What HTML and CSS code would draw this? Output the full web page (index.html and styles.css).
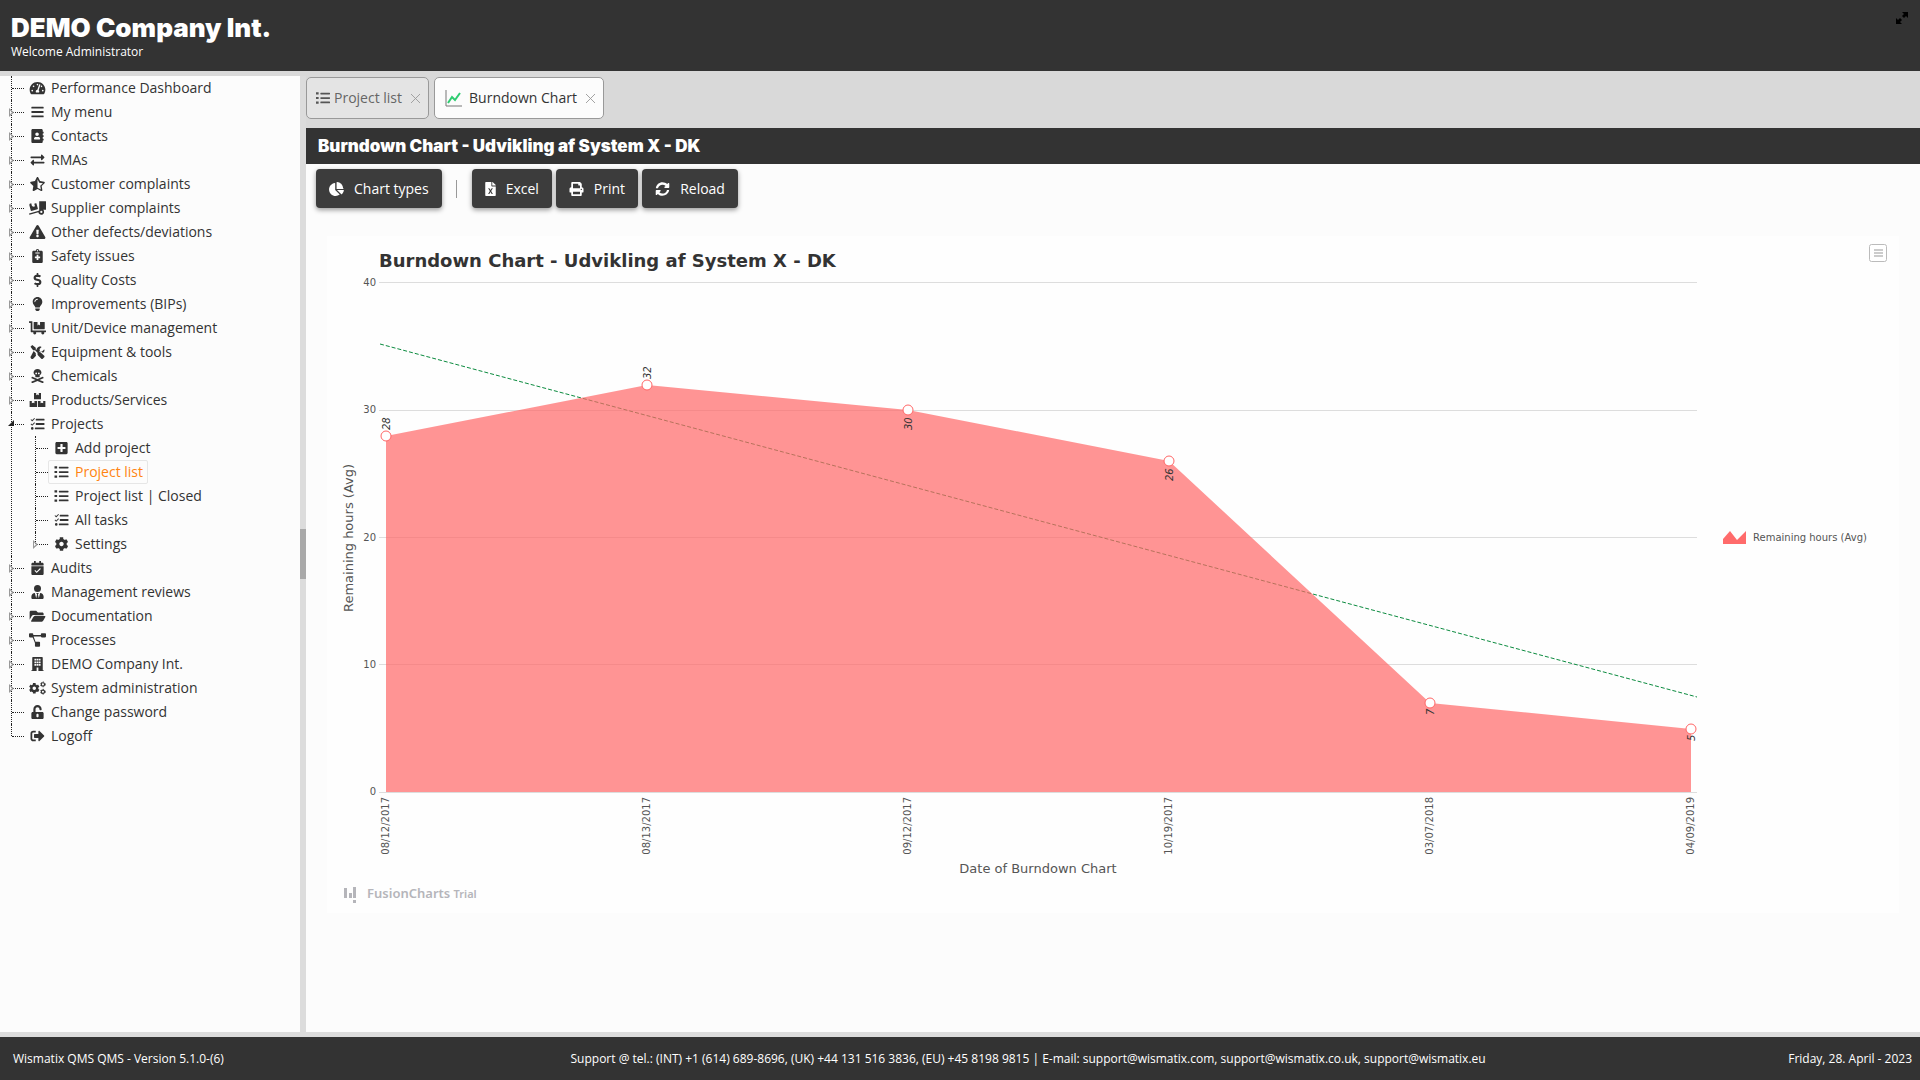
FILE: index.html
```html
<!DOCTYPE html>
<html lang="en">
<head>
<meta charset="utf-8">
<title>DEMO Company Int. - Burndown Chart</title>
<link rel="stylesheet" href="styles.css">
</head>
<body>
<svg class="sprite" aria-hidden="true">
  <symbol id="i-gauge" viewBox="0 0 576 512"><path d="M288 32C129 32 0 161 0 320c0 53 14 102 39 145 6 9 16 15 27 15h443c11 0 22-6 27-15 25-43 40-92 40-145C576 161 447 32 288 32zm0 64c15 0 26 10 30 24-1 2-3 4-4 7l-9 28c-5 3-11 5-17 5-18 0-32-14-32-32s14-32 32-32zM96 384c-18 0-32-14-32-32s14-32 32-32 32 14 32 32-14 32-32 32zm48-160c-18 0-32-14-32-32s14-32 32-32 32 14 32 32-14 32-32 32zm246-72l-61 184c14 12 23 29 23 48 0 12-3 23-9 32H233c-6-9-9-20-9-32 0-34 27-62 60-64l61-183c4-13 18-20 30-16 13 4 20 18 15 31zm15 57l15-46c4-1 8-3 12-3 18 0 32 14 32 32s-14 32-32 32c-11 0-21-6-27-15zm75 175c-18 0-32-14-32-32s14-32 32-32 32 14 32 32-14 32-32 32z"/></symbol>
  <symbol id="i-bars" viewBox="0 0 448 512"><path d="M16 132h416c9 0 16-7 16-16V76c0-9-7-16-16-16H16C7 60 0 67 0 76v40c0 9 7 16 16 16zm0 160h416c9 0 16-7 16-16v-40c0-9-7-16-16-16H16c-9 0-16 7-16 16v40c0 9 7 16 16 16zm0 160h416c9 0 16-7 16-16v-40c0-9-7-16-16-16H16c-9 0-16 7-16 16v40c0 9 7 16 16 16z"/></symbol>
  <symbol id="i-book" viewBox="0 0 448 512"><path d="M436 160c7 0 12-5 12-12v-40c0-7-5-12-12-12h-20V48c0-27-21-48-48-48H48C21 0 0 21 0 48v416c0 27 21 48 48 48h320c27 0 48-21 48-48v-48h20c7 0 12-5 12-12v-40c0-7-5-12-12-12h-20v-64h20c7 0 12-5 12-12v-40c0-7-5-12-12-12h-20v-64h20zm-228-32c35 0 64 29 64 64s-29 64-64 64-64-29-64-64 29-64 64-64zm112 237c0 10-10 19-22 19H118c-12 0-22-9-22-19v-19c0-32 30-58 67-58h5c12 5 26 8 40 8s28-3 40-8h5c37 0 67 26 67 58v19z"/></symbol>
  <symbol id="i-exchange" viewBox="0 0 512 512"><path d="M0 168v-16c0-13 11-24 24-24h360V80c0-21 26-32 41-17l80 80c9 9 9 25 0 34l-80 80c-15 15-41 4-41-17v-48H24c-13 0-24-11-24-24zm488 152H128v-48c0-21-26-32-41-17L7 335c-9 9-9 25 0 34l80 80c15 15 41 4 41-17v-48h360c13 0 24-11 24-24v-16c0-13-11-24-24-24z"/></symbol>
  <symbol id="i-star" viewBox="0 0 576 512"><path fill-rule="evenodd" d="M288 0c-11 0-23 6-29 18l-65 132-146 21c-26 4-37 36-18 55l106 103-25 146c-5 26 23 46 46 34l131-69 131 69c23 12 51-8 46-34l-25-146 106-103c19-19 8-51-18-55l-146-21-65-132C311 6 299 0 288 0zm0 80l63 128 135 20-98 96 23 134-123-64z"/></symbol>
  <symbol id="i-truck" viewBox="0 0 640 512"><path d="M384 0v352c-18 2-34 8-48 17L5 460c-4 2-6 6-4 10l10 31c1 4 6 7 10 5l331-90c8 54 52 96 106 96 60 0 110-50 110-110 0-32-13-58-35-76h107V16c0-9-7-16-16-16H384zm80 362a42 42 0 1 1 0 84 42 42 0 0 1 0-84zM16 166l50 184c3 12 15 19 27 16l224-61c12-3 19-15 16-27l-50-184c-3-12-15-19-27-16l-58 15 28 100-58 16-56-28-28-100-52 14c-12 3-19 15-16 27z"/></symbol>
  <symbol id="i-warning" viewBox="0 0 576 512"><path d="M570 440c18 32-5 72-42 72H48c-37 0-60-40-42-72L246 24c19-32 65-32 84 0l240 416zM288 354c-25 0-46 21-46 46s21 46 46 46 46-21 46-46-21-46-46-46zm-44-165l8 136c0 6 5 11 12 11h48c7 0 12-5 12-11l8-136c0-7-5-13-12-13h-64c-7 0-12 6-12 13z"/></symbol>
  <symbol id="i-clip" viewBox="0 0 384 512"><path fill-rule="evenodd" d="M336 64h-80a64 64 0 0 0-128 0H48C21 64 0 85 0 112v352c0 27 21 48 48 48h288c27 0 48-21 48-48V112c0-27-21-48-48-48zM192 40a24 24 0 1 1 0 48 24 24 0 0 1 0-48zm-80 88h160v32H112zM160 208h64v64h64v64h-64v64h-64v-64H96v-64h64z"/></symbol>
  <symbol id="i-dollar" viewBox="0 0 288 512"><path d="M209 233l-108-31c-13-4-21-16-21-29 0-16 13-29 29-29h66c12 0 24 4 34 11 6 4 14 3 20-2l35-34c7-7 6-18-2-24-24-19-54-30-86-31V16c0-9-7-16-16-16h-32c-9 0-16 7-16 16v48h-3C46 64-5 116 1 180c4 45 39 82 82 95l103 30c12 4 21 16 21 29 0 16-13 29-29 29h-66c-12 0-24-4-34-11-6-4-14-3-20 2l-35 34c-7 7-6 18 2 24 24 19 54 30 87 31v53c0 9 7 16 16 16h32c9 0 16-7 16-16v-53c46-1 90-28 105-72 21-61-14-121-72-138z"/></symbol>
  <symbol id="i-bulb" viewBox="0 0 352 512"><path fill-rule="evenodd" d="M96 454c0 6 2 13 5 18l17 25c6 9 16 15 27 15h62c11 0 21-6 27-15l17-25c4-5 5-11 5-18v-38H96v38zM0 176c0 44 16 85 43 116 17 19 43 59 53 92h160c10-33 36-73 53-92 27-31 43-72 43-116C352 79 273 0 176 0S0 79 0 176zm176-80c-44 0-80 36-80 80 0 9-7 16-16 16s-16-7-16-16c0-62 50-112 112-112 9 0 16 7 16 16s-7 16-16 16z"/></symbol>
  <symbol id="i-dolly" viewBox="0 0 640 512"><path d="M0 0h112c9 0 16 7 16 16v336h496c9 0 16 7 16 16v32c0 9-7 16-16 16h-55a56 56 0 1 1-98 0H265a56 56 0 1 1-98 0H80c-9 0-16-7-16-16V64H16C7 64 0 57 0 48zM176 48c0-9 7-16 16-16h128v128l48-32 48 32V32h160c9 0 16 7 16 16v240c0 9-7 16-16 16H192c-9 0-16-7-16-16z"/></symbol>
  <symbol id="i-tools" viewBox="0 0 512 512"><path d="M502 395L385 279c-27-27-65-32-97-16L192 167V96L64 0 0 64l96 128h71l96 96c-15 32-10 70 16 97l117 117c14 14 37 14 52 0l54-54c14-15 14-38 0-53zM331 225c38 0 73 15 99 41l19 19c15-6 29-16 41-27 21-22 26-54 18-84-3-9-15-11-22-4l-66 66-76-13-13-76 66-66c7-7 4-18-5-21-49-12-104 4-139 40-27 26-40 62-39 98l80 80zM196 298l-82-82L20 405c-27 27-27 61 0 87s61 27 87 0l95-96c-10-31-13-65-6-98z"/></symbol>
  <symbol id="i-skull" viewBox="0 0 448 512"><path d="M439 461L296 400l143-61c8-4 11-13 7-21l-14-29c-4-8-13-11-21-7l-187 80-187-80c-8-4-17 0-21 7L2 318c-4 8-1 17 7 21l143 61L9 461c-8 4-11 13-7 21l14 29c4 8 13 11 21 7l187-80 187 80c8 4 17 0 21-7l14-29c4-8 1-17-7-21zM144 233v55c0 9 8 16 17 16h126c9 0 17-7 17-16v-55c39-25 64-62 64-105C368 57 304 0 224 0S80 57 80 128c0 43 25 80 64 105zm128-106a33 33 0 1 1 0 66 33 33 0 0 1 0-66zm-96 0a33 33 0 1 1 0 66 33 33 0 0 1 0-66z"/></symbol>
  <symbol id="i-boxes" viewBox="0 0 576 512"><path d="M160 0h80v80l48-24 48 24V0h80v224H160zM0 288h80v88l48-24 48 24v-88h96v224H0zM304 288h96v88l48-24 48 24v-88h80v224H304z"/></symbol>
  <symbol id="i-tasks" viewBox="0 0 512 512"><path d="M140 36l24 23-91 93c-6 5-14 5-19 0L2 102l22-24 39 36zM140 196l24 23-91 93c-6 5-14 5-19 0L2 262l22-24 39 36zM64 368a48 48 0 1 1 0 96 48 48 0 0 1 0-96zM208 60h288c9 0 16 7 16 16v40c0 9-7 16-16 16H208c-9 0-16-7-16-16V76c0-9 7-16 16-16zm0 160h288c9 0 16 7 16 16v40c0 9-7 16-16 16H208c-9 0-16-7-16-16v-40c0-9 7-16 16-16zm-32 160h320c9 0 16 7 16 16v40c0 9-7 16-16 16H176c-9 0-16-7-16-16v-40c0-9 7-16 16-16z"/></symbol>
  <symbol id="i-plus" viewBox="0 0 448 512"><path d="M400 32H48C22 32 0 54 0 80v352c0 27 22 48 48 48h352c27 0 48-21 48-48V80c0-26-21-48-48-48zm-32 252c0 7-5 12-12 12h-92v92c0 7-5 12-12 12h-56c-7 0-12-5-12-12v-92H92c-7 0-12-5-12-12v-56c0-7 5-12 12-12h92v-92c0-7 5-12 12-12h56c7 0 12 5 12 12v92h92c7 0 12 5 12 12z"/></symbol>
  <symbol id="i-list" viewBox="0 0 512 512"><path d="M0 48h96v80H0zM0 216h96v80H0zM0 384h96v80H0zM176 60h320c9 0 16 7 16 16v32c0 9-7 16-16 16H176c-9 0-16-7-16-16V76c0-9 7-16 16-16zm0 164h320c9 0 16 7 16 16v32c0 9-7 16-16 16H176c-9 0-16-7-16-16v-32c0-9 7-16 16-16zm0 164h320c9 0 16 7 16 16v32c0 9-7 16-16 16H176c-9 0-16-7-16-16v-32c0-9 7-16 16-16z"/></symbol>
  <symbol id="i-cog" viewBox="0 0 512 512"><path d="M487 316l-42-25c4-23 4-47 0-70l42-25c5-3 7-9 6-14-11-36-30-68-55-95-4-4-10-5-15-2l-42 24c-18-15-39-27-61-35V25c0-5-4-11-9-12-37-8-75-7-110 0-5 1-9 6-9 12v49c-22 8-43 20-61 35L89 85c-5-3-11-2-15 2-25 27-44 59-55 95-2 5 1 11 6 14l42 25c-4 23-4 47 0 70l-42 25c-5 3-7 9-6 14 11 35 30 68 55 95 4 4 10 5 15 2l42-24c18 15 39 27 61 35v49c0 6 4 11 9 12 37 8 75 7 110 0 6-1 10-6 10-12v-49c22-8 42-20 60-35l43 24c4 3 11 2 14-2 26-27 45-59 56-95 1-5-2-11-7-14zM256 336c-44 0-80-36-80-80s36-80 80-80 80 36 80 80-36 80-80 80z"/></symbol>
  <symbol id="i-cal" viewBox="0 0 448 512"><path fill-rule="evenodd" d="M436 160H12c-7 0-12-5-12-12v-36c0-27 22-48 48-48h48V12c0-7 5-12 12-12h40c7 0 12 5 12 12v52h128V12c0-7 5-12 12-12h40c7 0 12 5 12 12v52h48c27 0 48 21 48 48v36c0 7-5 12-12 12zM12 192h424c7 0 12 5 12 12v260c0 27-21 48-48 48H48c-26 0-48-21-48-48V204c0-7 5-12 12-12zm333 96l-28-28-123 121-54-54-28 28 82 82z"/></symbol>
  <symbol id="i-tie" viewBox="0 0 448 512"><path d="M224 256a128 128 0 1 0 0-256 128 128 0 0 0 0 256zm96 33l-48 191-32-136 32-56h-96l32 56-32 136-48-191C57 292 0 351 0 422v42c0 27 22 48 48 48h352c27 0 48-21 48-48v-42c0-71-57-130-128-133z"/></symbol>
  <symbol id="i-folder" viewBox="0 0 576 512"><path d="M573 295l-72 124c-17 28-48 45-81 45H77c-18 0-30-20-20-36l72-124c16-29 47-48 80-48h344c18 0 30 23 20 39zM209 224h303v-48c0-27-21-48-48-48H304l-64-64H48C22 64 0 86 0 112v278l77-131c28-48 77-35 132-35z"/></symbol>
  <symbol id="i-flow" viewBox="0 0 640 512"><path d="M32 0h96c18 0 32 14 32 32v32h288V32c0-18 14-32 32-32h128c18 0 32 14 32 32v96c0 18-14 32-32 32H480c-18 0-32-14-32-32h-274l72 192h138c18 0 32 14 32 32v128c0 18-14 32-32 32H256c-18 0-32-14-32-32V370L140 160H32c-18 0-32-14-32-32V32C0 14 14 0 32 0z"/></symbol>
  <symbol id="i-building" viewBox="0 0 448 512"><path fill-rule="evenodd" d="M436 480h-20V24c0-13-11-24-24-24H56C43 0 32 11 32 24v456H12c-7 0-12 5-12 12v20h448v-20c0-7-5-12-12-12zM112 64h64v64h-64zm80 0h64v64h-64zm80 0h64v64h-64zM112 160h64v64h-64zm80 0h64v64h-64zm80 0h64v64h-64zM112 256h64v64h-64zm80 0h64v64h-64zm80 0h64v64h-64zM192 384h64v128h-64z"/></symbol>
  <symbol id="i-cogs" viewBox="0 0 640 512"><g transform="translate(-6 62) scale(.8)"><path d="M487 316l-42-25c4-23 4-47 0-70l42-25c5-3 7-9 6-14-11-36-30-68-55-95-4-4-10-5-15-2l-42 24c-18-15-39-27-61-35V25c0-5-4-11-9-12-37-8-75-7-110 0-5 1-9 6-9 12v49c-22 8-43 20-61 35L89 85c-5-3-11-2-15 2-25 27-44 59-55 95-2 5 1 11 6 14l42 25c-4 23-4 47 0 70l-42 25c-5 3-7 9-6 14 11 35 30 68 55 95 4 4 10 5 15 2l42-24c18 15 39 27 61 35v49c0 6 4 11 9 12 37 8 75 7 110 0 6-1 10-6 10-12v-49c22-8 42-20 60-35l43 24c4 3 11 2 14-2 26-27 45-59 56-95 1-5-2-11-7-14zM256 336c-44 0-80-36-80-80s36-80 80-80 80 36 80 80-36 80-80 80z"/></g><g fill="none" stroke="currentColor"><g stroke-width="44"><circle cx="524" cy="120" r="62"/><circle cx="524" cy="396" r="62"/></g><g stroke-width="34" stroke-dasharray="46 48"><circle cx="524" cy="120" r="90"/><circle cx="524" cy="396" r="90"/></g></g></symbol>
  <symbol id="i-unlock" viewBox="0 0 448 512"><path fill-rule="evenodd" d="M400 256H152v-104c0-39 31-72 71-72 40 0 73 32 73 72v16c0 13 11 24 24 24h32c13 0 24-11 24-24v-16C376 68 307 0 223 0 139 0 72 70 72 154v102H48c-26 0-48 22-48 48v160c0 27 22 48 48 48h352c27 0 48-21 48-48V304c0-26-21-48-48-48zM264 408c0 22-18 40-40 40s-40-18-40-40v-48c0-22 18-40 40-40s40 18 40 40z"/></symbol>
  <symbol id="i-signout" viewBox="0 0 512 512"><path d="M497 273L329 441c-15 15-41 5-41-17v-96H152c-13 0-24-11-24-24v-96c0-13 11-24 24-24h136V88c0-21 26-32 41-17l168 168c9 9 9 25 0 34zM192 436v-40c0-7-5-12-12-12H96c-18 0-32-14-32-32V160c0-18 14-32 32-32h84c7 0 12-5 12-12V76c0-7-5-12-12-12H96c-53 0-96 43-96 96v192c0 53 43 96 96 96h84c7 0 12-5 12-12z"/></symbol>
  <symbol id="i-pie" viewBox="0 0 544 512"><path d="M528 288H290l158 158c6 6 16 7 22 1 39-37 66-86 74-141 1-10-7-18-16-18zm-16-67C504 101 411 8 292 0c-9-1-17 7-17 16v240h240c9 0 17-8 16-17zM224 288V50c0-9-8-17-17-16C87 51 -4 155 0 280c5 129 115 233 244 232 50-1 97-17 135-44 8-5 9-17 2-24z"/></symbol>
  <symbol id="i-excel" viewBox="0 0 384 512"><path fill-rule="evenodd" d="M224 136V0H24C11 0 0 11 0 24v464c0 13 11 24 24 24h336c13 0 24-11 24-24V160H248c-13 0-24-11-24-24zM105 224h45l42 70 42-70h45l-62 104 62 112h-45l-42-72-42 72h-45l62-112zM384 122v6H256V0h6c6 0 12 3 17 7l98 98c4 4 7 11 7 17z"/></symbol>
  <symbol id="i-print" viewBox="0 0 512 512"><path fill-rule="evenodd" d="M448 192V77c0-8-3-17-9-23l-45-45c-6-6-14-9-23-9H96C78 0 64 14 64 32v160c-35 0-64 29-64 64v112c0 9 7 16 16 16h48v96c0 18 14 32 32 32h320c18 0 32-14 32-32v-96h48c9 0 16-7 16-16V256c0-35-29-64-64-64zm-64 256H128v-96h256zm0-224H128V64h192v48c0 9 7 16 16 16h48zm48 72a24 24 0 1 1 0-48 24 24 0 0 1 0 48z"/></symbol>
  <symbol id="i-sync" viewBox="0 0 512 512"><path d="M371 143c-32-30-73-46-116-46-76 0-143 52-161 126-1 5-6 9-12 9H25c-8 0-13-7-12-14C33 92 134 8 256 8c66 0 127 26 171 69l36-36c15-15 41-5 41 17v134c0 13-11 24-24 24H346c-22 0-32-26-17-41zM32 296h134c22 0 32 26 17 41l-42 42c31 30 72 46 115 46 78 0 143-53 161-126 1-5 6-9 12-9h57c8 0 13 7 12 14-21 116-122 200-243 200-66 0-127-26-171-69l-36 36C34 486 8 476 8 454V320c0-13 11-24 24-24z"/></symbol>
</svg>

<header class="top">
  <div>
    <h1 class="company">DEMO Company Int.</h1>
    <p class="welcome">Welcome Administrator</p>
  </div>
  <button class="expand" aria-label="Full screen"><svg viewBox="0 0 12 12"><path d="M6 0h6v6l-2-2-2 2-2-2 2-2zM0 6l2 2 2-2 2 2-2 2 2 2H0z"/></svg></button>
</header>

<div class="work">
  <nav class="side" aria-label="Main menu">
    <ul class="tree">
      <li><a href="#"><svg><use href="#i-gauge"/></svg>Performance Dashboard</a></li>
      <li class="closed"><a href="#"><svg><use href="#i-bars"/></svg>My menu</a></li>
      <li class="closed"><a href="#"><svg><use href="#i-book"/></svg>Contacts</a></li>
      <li class="closed"><a href="#"><svg><use href="#i-exchange"/></svg>RMAs</a></li>
      <li class="closed"><a href="#"><svg><use href="#i-star"/></svg>Customer complaints</a></li>
      <li class="closed"><a href="#"><svg><use href="#i-truck"/></svg>Supplier complaints</a></li>
      <li class="closed"><a href="#"><svg><use href="#i-warning"/></svg>Other defects/deviations</a></li>
      <li class="closed"><a href="#"><svg><use href="#i-clip"/></svg>Safety issues</a></li>
      <li class="closed"><a href="#"><svg><use href="#i-dollar"/></svg>Quality Costs</a></li>
      <li class="closed"><a href="#"><svg><use href="#i-bulb"/></svg>Improvements (BIPs)</a></li>
      <li class="closed"><a href="#"><svg><use href="#i-dolly"/></svg>Unit/Device management</a></li>
      <li class="closed"><a href="#"><svg><use href="#i-tools"/></svg>Equipment &amp; tools</a></li>
      <li class="closed"><a href="#"><svg><use href="#i-skull"/></svg>Chemicals</a></li>
      <li class="closed"><a href="#"><svg><use href="#i-boxes"/></svg>Products/Services</a></li>
      <li class="open"><a href="#"><svg><use href="#i-tasks"/></svg>Projects</a>
        <ul class="tree sub">
          <li><a href="#"><svg><use href="#i-plus"/></svg>Add project</a></li>
          <li><a href="#" class="current"><svg><use href="#i-list"/></svg>Project list</a></li>
          <li><a href="#"><svg><use href="#i-list"/></svg>Project list | Closed</a></li>
          <li><a href="#"><svg><use href="#i-tasks"/></svg>All tasks</a></li>
          <li class="closed"><a href="#"><svg><use href="#i-cog"/></svg>Settings</a></li>
        </ul>
      </li>
      <li class="closed"><a href="#"><svg><use href="#i-cal"/></svg>Audits</a></li>
      <li class="closed"><a href="#"><svg><use href="#i-tie"/></svg>Management reviews</a></li>
      <li class="closed"><a href="#"><svg><use href="#i-folder"/></svg>Documentation</a></li>
      <li class="closed"><a href="#"><svg><use href="#i-flow"/></svg>Processes</a></li>
      <li class="closed"><a href="#"><svg><use href="#i-building"/></svg>DEMO Company Int.</a></li>
      <li class="closed"><a href="#"><svg><use href="#i-cogs"/></svg>System administration</a></li>
      <li><a href="#"><svg><use href="#i-unlock"/></svg>Change password</a></li>
      <li><a href="#"><svg><use href="#i-signout"/></svg>Logoff</a></li>
    </ul>
  </nav>
  <div class="splitter"><span class="grip"></span></div>

  <main class="content">
    <div class="tabs">
      <div class="tab">
        <a href="#"><svg class="tab-icon"><use href="#i-list"/></svg>Project list</a>
        <button class="close" aria-label="Close Project list"><svg viewBox="0 0 10 10"><path d="M0 0l10 10M10 0L0 10"/></svg></button>
      </div>
      <div class="tab active">
        <a href="#"><svg class="tab-chart" viewBox="0 0 17 17"><path class="axis" d="M1 0v16h16"/><path class="trend" d="M3 13l4-6 3 3 5-7"/></svg>Burndown Chart</a>
        <button class="close" aria-label="Close Burndown Chart"><svg viewBox="0 0 10 10"><path d="M0 0l10 10M10 0L0 10"/></svg></button>
      </div>
    </div>
    <h2 class="title">Burndown Chart - Udvikling af System X - DK</h2>
    <div class="toolbar">
      <button class="btn"><svg><use href="#i-pie"/></svg>Chart types</button>
      <span class="divider"></span>
      <button class="btn"><svg class="narrow"><use href="#i-excel"/></svg>Excel</button>
      <button class="btn"><svg><use href="#i-print"/></svg>Print</button>
      <button class="btn"><svg><use href="#i-sync"/></svg>Reload</button>
    </div>
    <section class="chart">
      <svg viewBox="0 0 1572 677" role="img" aria-label="Burndown chart">
        <rect class="canvas" width="1572" height="677"/>
        <text class="chart-title" x="52" y="31">Burndown Chart - Udvikling af System X - DK</text>
        <g class="menu-icon"><rect x="1542.500" y="8.500" width="17" height="17" rx="2"/><path d="M1547 14h9M1547 17h9M1547 20h9"/></g>
        <path class="grid" d="M52 46.500h1318M52 174.500h1318M52 301.500h1318M52 428.500h1318M52 556.500h1318"/>
        <path class="ideal" d="M53 108L1370 461"/>
        <path class="area" d="M59 200L320 149L581 174L842 225L1103 467L1364 493V556H59z"/>
        <g class="values">
          <text transform="translate(63 194) rotate(-90)">28</text>
          <text transform="translate(324 143) rotate(-90)">32</text>
          <text transform="translate(585 194) rotate(-90)">30</text>
          <text transform="translate(846 245) rotate(-90)">26</text>
          <text transform="translate(1107 479) rotate(-90)">7</text>
          <text transform="translate(1368 505) rotate(-90)">5</text>
        </g>
        <g class="points"><circle cx="59" cy="200" r="5"/><circle cx="320" cy="149" r="5"/><circle cx="581" cy="174" r="5"/><circle cx="842" cy="225" r="5"/><circle cx="1103" cy="467" r="5"/><circle cx="1364" cy="493" r="5"/></g>
        <g class="labels end">
          <text x="49" y="50">40</text><text x="49" y="177">30</text><text x="49" y="305">20</text><text x="49" y="432">10</text><text x="49" y="559">0</text>
          <text transform="translate(62 561) rotate(-90)">08/12/2017</text>
          <text transform="translate(323 561) rotate(-90)">08/13/2017</text>
          <text transform="translate(584 561) rotate(-90)">09/12/2017</text>
          <text transform="translate(845 561) rotate(-90)">10/19/2017</text>
          <text transform="translate(1106 561) rotate(-90)">03/07/2018</text>
          <text transform="translate(1367 561) rotate(-90)">04/09/2019</text>
        </g>
        <g class="axis-title">
          <text transform="translate(26 302) rotate(-90)">Remaining hours (Avg)</text>
          <text x="711" y="637">Date of Burndown Chart</text>
        </g>
        <path class="legend-mark" d="M1396 308v-5l7-8 7 9 9-9v13z"/>
        <text class="labels" x="1426" y="305">Remaining hours (Avg)</text>
        <path class="brand-mark" d="M17 652h3v10h-3zM22 657h3v5h-3zM26 651h3v11h-3zM26 664h3v3h-3z"/>
        <text class="brand" x="40" y="662">FusionCharts <tspan class="trial">Trial</tspan></text>
      </svg>
    </section>
  </main>
</div>

<footer class="bottom">
  <span>Wismatix QMS QMS - Version 5.1.0-(6)</span>
  <span>Support @ tel.: (INT) +1 (614) 689-8696, (UK) +44 131 516 3836, (EU) +45 8198 9815 | E-mail: support@wismatix.com, support@wismatix.co.uk, support@wismatix.eu</span>
  <span class="date">Friday, 28. April - 2023</span>
</footer>
</body>
</html>
```
FILE: styles.css
```css
* { box-sizing: border-box; }

body {
  display: flex;
  flex-direction: column;
  min-height: 100vh;
  margin: 0;
  background: #fcfcfc;
  color: #333;
  font: 14px/24px "Open Sans", "Noto Sans", sans-serif;
}

a { color: inherit; text-decoration: none; }
button { font: inherit; border: 0; padding: 0; cursor: pointer; }
svg { fill: currentColor; }
.sprite { display: none; }

/* Header */
.top {
  display: flex;
  justify-content: space-between;
  align-items: flex-start;
  padding: 12px 12px 11px 11px;
  background: #333;
  color: #fff;
}
.company { margin: 0; font: 900 26px/32px Inter, "Liberation Sans", sans-serif; }
.welcome { margin: 0; font-size: 12px; line-height: 16px; }
.expand { background: none; color: #000; }
.expand svg { display: block; width: 12px; height: 12px; }

/* Work area */
.work {
  display: flex;
  flex: 1;
  border-top: 5px solid #d9d9d9;
  border-bottom: 5px solid #dcdcdc;
}
.side { width: 300px; flex: none; overflow: hidden; }
.splitter { display: flex; align-items: center; width: 6px; flex: none; background: #dcdcdc; }
.grip { width: 6px; height: 50px; background: #a9a9a9; }
.content { flex: 1; min-width: 0; }

/* Menu tree */
.tree { margin: 0; padding: 0 0 0 11px; list-style: none; }
.tree li { position: relative; padding-left: 13px; }
.tree li::before {
  content: "";
  position: absolute;
  left: 0;
  top: 0;
  bottom: 0;
  border-left: 1px dotted #222;
}
.tree li:last-child::before { bottom: auto; height: 12px; }
.tree li::after {
  content: "";
  position: absolute;
  left: 1px;
  top: 12px;
  width: 12px;
  border-top: 1px dotted #222;
}
.tree a {
  display: inline-flex;
  align-items: center;
  gap: 5px;
  height: 24px;
  padding: 0 4px;
  border: 1px solid transparent;
  border-radius: 2px;
  vertical-align: top;
}
.tree a svg { width: 17px; height: 14px; }
.tree .current { color: #ff8412; border-color: #e6e6e6; }
.tree .current svg { color: #333; }
.closed > a::before,
.open > a::before {
  content: "";
  position: absolute;
  z-index: 1;
  left: -2px;
  top: 8px;
  width: 5px;
  height: 9px;
  background: #999;
  clip-path: polygon(0 0, 100% 50%, 0 100%, 0 80%, 60% 50%, 20% 25%, 20% 80%, 0 100%);
}
.open > a::before { left: -3px; width: 6px; height: 6px; background: #222; clip-path: polygon(100% 0, 100% 100%, 0 100%); }

/* Tabs */
.tabs { display: flex; gap: 5px; padding: 1px 0 9px; background: #d9d9d9; }
.tab {
  display: flex;
  align-items: center;
  gap: 9px;
  height: 42px;
  padding: 0 8px 0 9px;
  border: 1px solid #999;
  border-radius: 5px;
  background: #e4e4e4;
  color: #666;
}
.tab a { display: flex; align-items: center; gap: 4px; }
.active { background: #fcfcfc; color: #333; padding-left: 10px; }
.active a { gap: 7px; }
.tab-icon { width: 14px; height: 14px; color: #555; }
.tab-chart { width: 17px; height: 17px; fill: none; stroke-width: 1; }
.axis { stroke: #777; }
.trend { stroke: #2ecc71; stroke-width: 2; }
.close { background: none; }
.close svg { display: block; width: 9px; height: 9px; stroke: #999; }

/* Page title and toolbar */
.title {
  margin: 0;
  padding: 0 12px;
  background: #333;
  color: #fff;
  font: 900 17px/36px Inter, "Liberation Sans", sans-serif;
}
.toolbar { display: flex; align-items: center; gap: 4px; padding: 5px 10px; }
.btn {
  display: flex;
  align-items: center;
  gap: 10px;
  height: 39px;
  padding: 0 13px;
  border-radius: 4px;
  background: #3c3c3c;
  color: #fff;
  box-shadow: 0 2px 5px rgba(0, 0, 0, .4);
}
.btn svg { width: 15px; height: 14px; }
.btn .narrow { width: 11px; }
.divider { width: 1px; height: 18px; margin: 0 11px 0 10px; background: #999; }

/* Chart */
.chart { padding: 23px 21px; }
.chart svg { display: block; width: 100%; font-family: Verdana, "DejaVu Sans", sans-serif; }
.canvas { fill: #fefefe; }
.chart-title { font-size: 18px; font-weight: bold; fill: #333; }
.grid { stroke: #ddd; }
.ideal { stroke: #0b8b3f; stroke-dasharray: 4 2; }
.area { fill: #ff6666; fill-opacity: .7; }
.points { fill: #fff; stroke: #ff6666; }
.values { font-size: 10px; font-style: italic; fill: #333; }
.labels { font-size: 10px; fill: #555; }
.end { text-anchor: end; }
.axis-title { font-size: 13px; text-anchor: middle; fill: #555; }
.menu-icon { fill: #fff; stroke: #bbb; }
.menu-icon path { stroke: #ccc; stroke-width: 2; }
.legend-mark { fill: #ff6b6b; }
.brand-mark { fill: #b5b5ba; }
.brand { font: 600 13px "Noto Sans", sans-serif; fill: #b5b5ba; }
.trial { font-size: 11px; }

/* Footer */
.bottom {
  display: grid;
  grid-template-columns: 17fr auto 13fr;
  padding: 0 8px 0 13px;
  background: #333;
  color: #fff;
  font-size: 12px;
  line-height: 43px;
}
.date { text-align: right; }
```
